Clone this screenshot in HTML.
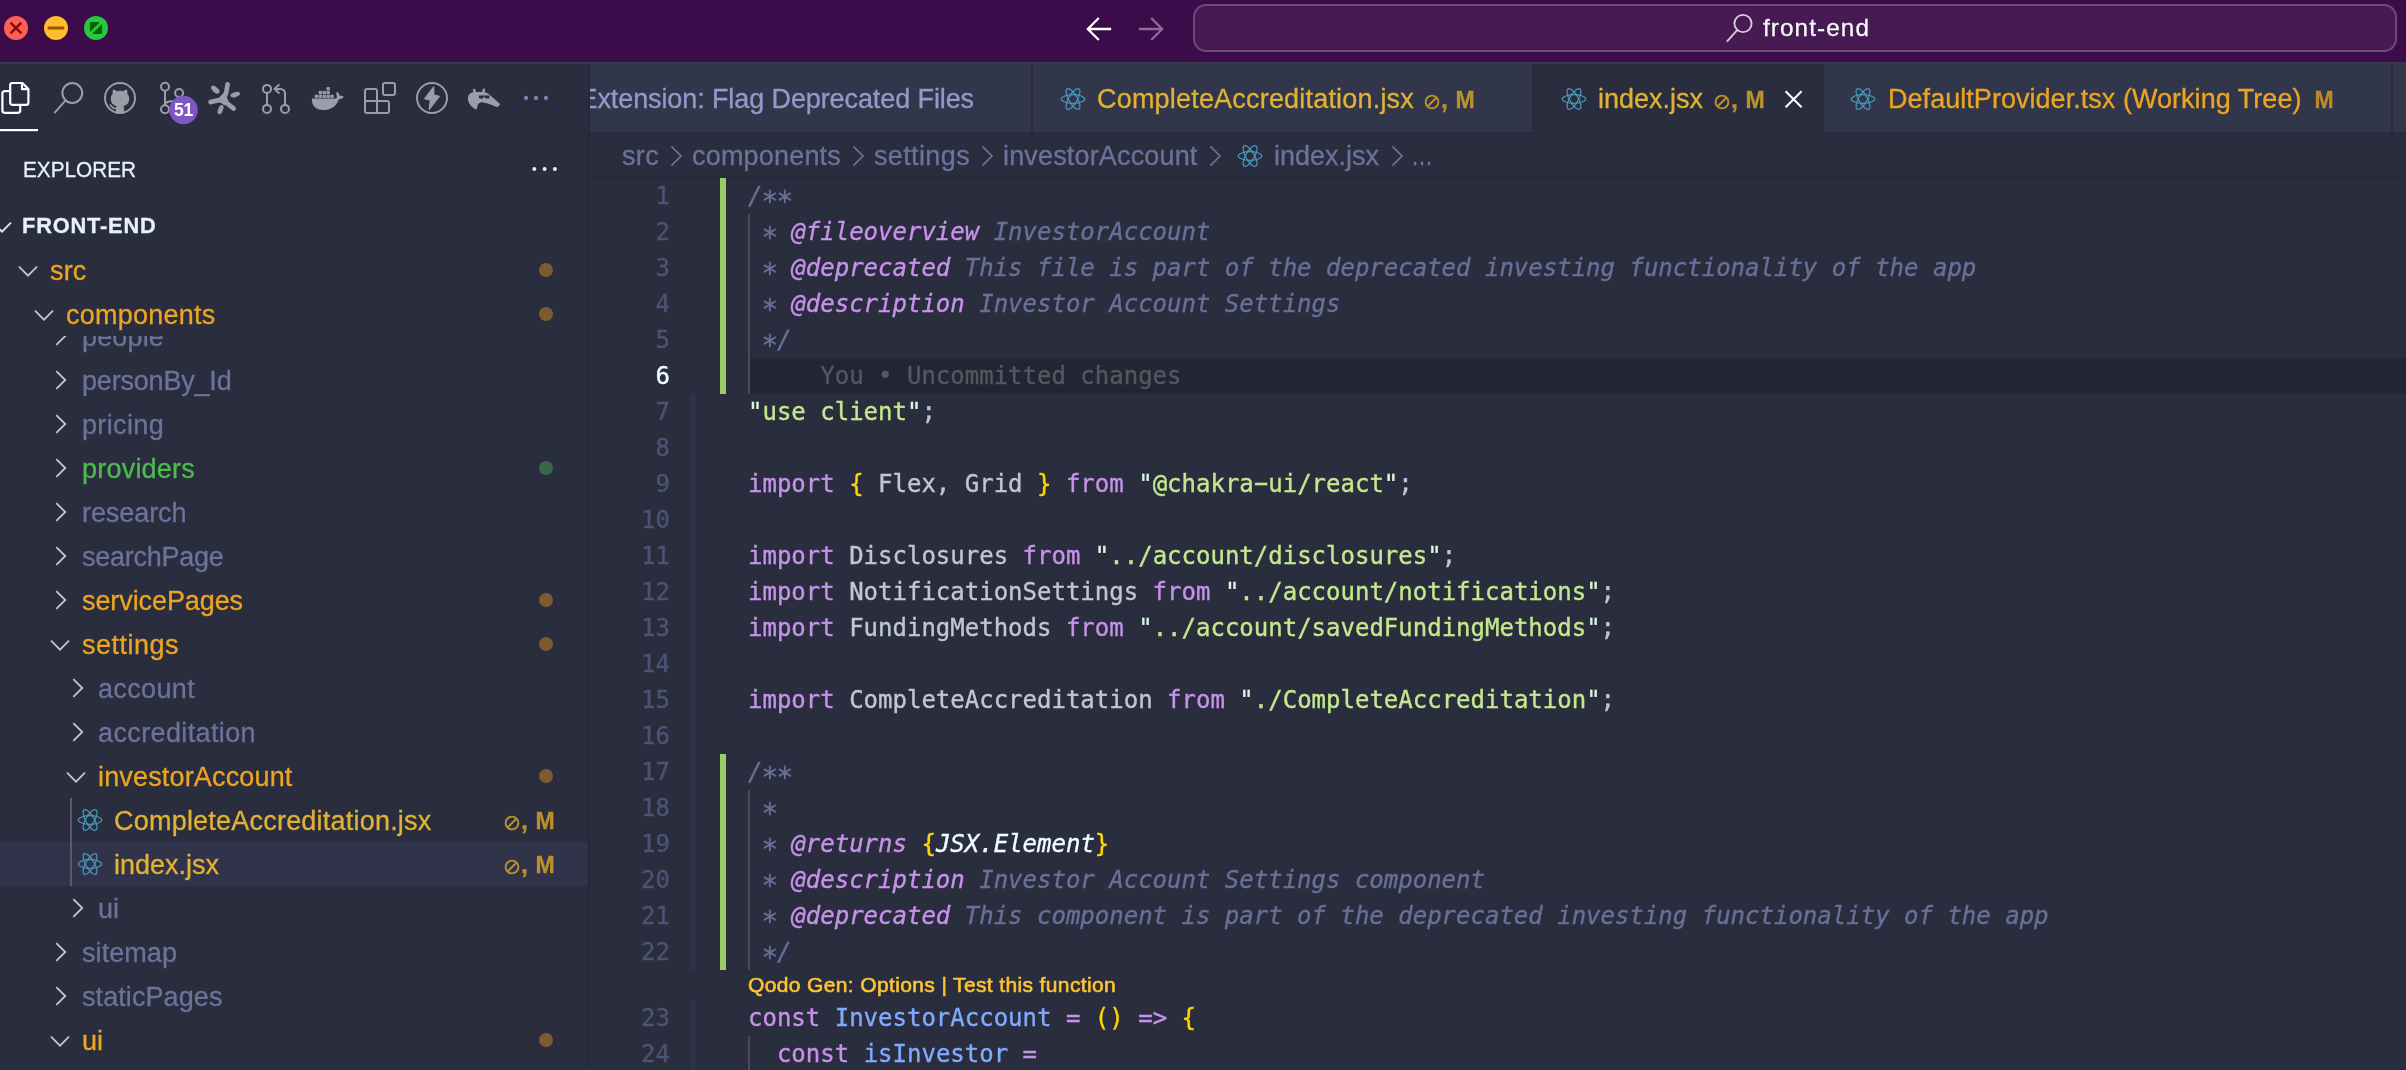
<!DOCTYPE html>
<html lang="en"><head><meta charset="utf-8"><title>index.jsx — front-end</title>
<style>
html,body{margin:0;padding:0;background:#292d3e;}
body{width:2406px;height:1070px;overflow:hidden;position:relative;font-family:"Liberation Sans", sans-serif;}
#app{position:absolute;left:0;top:0;width:2406px;height:1070px;overflow:hidden;will-change:transform;}
#app div,#app span,#app svg{position:absolute;white-space:pre;}
#app span{-webkit-text-stroke:0.3px currentColor;}
#app .cl,#app .cl span,#app .ln{-webkit-text-stroke:0.35px currentColor;}
#app .cl{left:748px;height:36px;line-height:36px;font-family:"DejaVu Sans Mono", "Liberation Mono", monospace;font-size:24px;color:#bfc7d5;letter-spacing:0.001px;}
#app .cl span,#app .cl i{position:static;}
#app .ln{left:600px;width:70px;text-align:right;height:36px;line-height:36px;font-family:"DejaVu Sans Mono", "Liberation Mono", monospace;font-size:24px;color:#4c5374;}
.c{color:#697098;font-style:italic;}
.t{color:#c792ea;font-style:italic;}
.k{color:#c792ea;}
.s{color:#c3e88d;}
.q{color:#d9f5dd;}
.f{color:#82aaff;}
.g{color:#ffd700;}
.w{color:#eeffff;font-style:italic;}
#app .cl .h{display:inline-block;transform:translateY(-0.700px) scaleX(1.920);}
#app .cl .a{display:inline-block;font-style:normal;transform:translate(0.600px,5.500px) scale(1.160);}
</style></head>
<body><div id="app">
<div style="left:0px;top:0px;width:2406px;height:62px;background:#3c0c4a;"></div>
<div style="left:0px;top:62px;width:2406px;height:2px;background:#343a50;"></div>
<div style="left:0px;top:64px;width:588px;height:1006px;background:#292d3e;"></div>
<div style="left:588px;top:64px;width:2px;height:1006px;background:#262939;"></div>
<div style="left:0px;top:132px;width:588px;height:1.5px;background:#272a3a;"></div>
<div style="left:590px;top:64px;width:1816px;height:68px;background:#31364a;"></div>
<div style="left:590px;top:132px;width:1816px;height:938px;background:#292d3e;"></div>
<svg style="left:0;top:0" width="130" height="62" viewBox="0 0 130 62">
<circle cx="16" cy="28" r="12" fill="#fe5f57"/><path d="M11.300 23.300l9.300 9.300M20.600 23.300l-9.300 9.300" stroke="#8c0a05" stroke-width="2.500" stroke-linecap="round" fill="none"/>
<circle cx="56" cy="28" r="12" fill="#febc2e"/><path d="M49 28h14" stroke="#985700" stroke-width="3" stroke-linecap="round"/>
<circle cx="96" cy="28" r="12" fill="#28c840"/><path d="M90.3 22.6h8.6l-8.6 8.6zM101.7 33.4h-8.6l8.6-8.6z" fill="#006500" stroke="#006500" stroke-width="1" stroke-linejoin="round"/>
</svg>
<svg style="left:1080px;top:10px" width="100" height="40" viewBox="0 0 100 40" fill="none" stroke-width="2.3" stroke-linecap="square" stroke-linejoin="miter">
<path d="M30 19H8.5M18 8.8L7.8 19L18 29.2" stroke="#ffffff"/>
<path d="M60 19H81.5M72 8.8L82.2 19L72 29.2" stroke="#8d6a99"/>
</svg>
<div style="left:1193px;top:4px;width:1200px;height:44px;border:2px solid #6d4a7c;border-radius:13px;background:#471a54"></div>
<svg style="left:1720px;top:10px" width="40" height="40" viewBox="0 0 40 40" fill="none" stroke="#d9cadd" stroke-width="1.9">
<circle cx="23" cy="13.5" r="8.6"/><path d="M17.2 20.2L7.5 31" stroke-linecap="square"/></svg>
<span style="left:1763px;top:11.9px;height:32px;line-height:32px;font-size:24.3px;color:#f4fbf6;font-weight:400;letter-spacing:1.084px;">front-end</span>
<svg style="left:0;top:64px" width="588" height="70" viewBox="0 64 588 70" fill="none" stroke="#9c9da9" stroke-width="2" stroke-linejoin="round">
<!-- explorer (active) -->
<g stroke="#ffffff" stroke-width="2.2">
<path d="M22.4 83H12.4a2.2 2.2 0 0 0-2.2 2.2V102.7a2.2 2.2 0 0 0 2.2 2.2H26.2a2.2 2.2 0 0 0 2.2-2.2V89Z"/>
<path d="M22 83.4V89.2H28"/>
<path d="M9.6 91.1H4.6a2.2 2.2 0 0 0-2.2 2.2V110.6a2.2 2.2 0 0 0 2.2 2.2H18a2.2 2.2 0 0 0 2.2-2.2V105.6"/>
</g>
<rect x="0" y="129" width="38" height="2.2" fill="#ffffff" stroke="none"/>
<!-- search -->
<circle cx="72.3" cy="93" r="9.9"/><path d="M65.6 100.4L54.3 113.2"/>
<!-- github -->
<circle cx="120" cy="98" r="15"/>
<g transform="translate(0 2.1)">
<path stroke="none" fill="#9c9da9" d="M120 88.6c-1.1 0-2.2.15-3.2.45-1.9-1.3-3.2-1.6-3.9-1.2-.5 1.3-.55 2.6-.2 3.700-1.200 1.300-1.900 3-1.900 5 0 4.300 2.400 6.600 5.900 7.400-.5.600-.75 1.400-.8 2.300v3.500c1.300.400 2.700.600 4.100.600s2.800-.2 4.100-.600v-3.100c0-1.200-.3-2.100-.85-2.700 3.500-.8 5.950-3.100 5.950-7.400 0-2-.7-3.700-1.900-5 .35-1.100.3-2.400-.2-3.700-.7-.4-2-.1-3.900 1.200-1-.3-2.100-.45-3.200-.45Z"/>
<path d="M116 106.200c-2.300.5-3.400-.5-4.200-1.800-.4-.7-1-1.300-1.700-1.500" stroke-width="1.500" stroke-linecap="round"/>
</g>
<!-- source control -->
<circle cx="165" cy="86.7" r="4"/><circle cx="165" cy="109.2" r="4"/><circle cx="179.1" cy="93" r="4"/>
<path d="M165 90.700V105.200M179.100 97c0 3.200-2.600 4.300-6.800 4.300-4.300 0-7.300 1.200-7.300 3.900"/>
<circle cx="183.500" cy="110" r="14.300" fill="#7e57c2" stroke="none"/>
<!-- asterisk-like logo -->
<g stroke-width="4.700" stroke-linecap="round">
<path d="M223.200 100.200C225.800 95 227.300 89.500 227.600 84.400M224 99.600C219.500 99.700 215 100.700 210.600 102.100M222.800 99C226 102.800 229.600 105.800 233.700 108.500"/>
</g>
<g stroke="none" fill="#9c9da9">
<ellipse cx="215.300" cy="89.700" rx="5.100" ry="2.600" transform="rotate(42 215.300 89.700)"/>
<ellipse cx="235.200" cy="94.600" rx="4.900" ry="2.500" transform="rotate(-18 235.200 94.600)"/>
<ellipse cx="220.600" cy="109.600" rx="4.800" ry="2.400" transform="rotate(-68 220.600 109.600)"/>
<path d="M218.500 98L224.500 92L228.500 101L224.500 105.500L220.500 102.500Z"/>
</g>
<!-- pull request -->
<circle cx="267" cy="88.900" r="4"/><circle cx="267" cy="108.900" r="4"/><circle cx="285" cy="108.900" r="4"/>
<path d="M267 92.900V104.900M285 104.900V93.400a4.500 4.500 0 0 0-4.500-4.500H275" />
<path d="M279.400 84.300L274.600 88.900L279.400 93.500" stroke-linejoin="miter"/>
<!-- docker -->
<g stroke="none" fill="#9c9da9">
<path d="M311.900 98.600h22.700c1.600 0 2.500-.5 2.300-2-.3-1.700-.8-3.200-.5-4.200.6-.5 1.200-.3 1.700.3 1.200 1.400 1.600 2.500 1.800 3.300 1.400-.3 2.700-.1 3.700.6-.8 1.800-2.500 2.500-4.600 2.600-2.800 7.300-8.300 10.800-15.600 10.800-7.600 0-11.900-4.200-11.500-11.400Z"/>
<rect x="314.800" y="94.700" width="3.300" height="3.200"/><rect x="318.700" y="94.700" width="3.300" height="3.200"/><rect x="322.600" y="94.700" width="3.300" height="3.200"/><rect x="326.500" y="94.700" width="3.300" height="3.200"/><rect x="330.400" y="94.700" width="3.300" height="3.200"/>
<rect x="318.700" y="90.900" width="3.300" height="3.200"/><rect x="322.600" y="90.900" width="3.300" height="3.200"/><rect x="326.500" y="90.900" width="3.300" height="3.200"/>
<rect x="326.500" y="87.100" width="3.300" height="3.200"/>
</g>
<!-- extensions -->
<path d="M377 101V91a2 2 0 0 0-2-2H367a2 2 0 0 0-2 2V111a2 2 0 0 0 2 2H387a2 2 0 0 0 2-2V103a2 2 0 0 0-2-2H365M377 101V113"/>
<rect x="383" y="83" width="12" height="12" rx="2"/>
<!-- thunder -->
<circle cx="432" cy="98" r="15"/>
<path stroke="#9c9da9" stroke-width="1.200" fill="#9c9da9" d="M433.700 86.800L424.700 98.700L430.400 100.100L429.200 109.300L439.300 96.300L433.900 95Z"/>
<!-- aardvark -->
<path stroke="none" fill="#9c9da9" fill-rule="evenodd" d="M467.900 99c-.3-2.600.8-4.500 2.600-5.800 1-.6 2-.9 2.900-1l-.5-2.700c-.1-.9 2.200-1 2.400-.1l.6 2.700h6.200l.6-2.900c.2-.9 2.500-.7 2.400.2l-.4 2.800c1.500.3 2.900 1 4.300 2l10.500 9.200c.7.700.5 1.300.1 1.600l-1.700 1.700c-.4.400-.9.400-1.400.2-4.400-2.200-8.800-3.900-13.400-4.500-2.700-.3-4.300.5-5.200 2.600l-1.500 4.700c-4.600-2.200-8-5.900-8.500-10.700ZM478.900 95.600h10.500v1.400c0 .9-.6 1.600-1.500 1.600h-1.600c-.9 0-1.500-.7-1.500-1.600v-.3h-1.300v.3c0 .9-.6 1.600-1.500 1.600h-1.600c-.9 0-1.500-.7-1.500-1.600Z"/>
<!-- more -->
<g stroke="none" fill="#7a83b4"><circle cx="526" cy="98" r="2.150"/><circle cx="536" cy="98" r="2.150"/><circle cx="546" cy="98" r="2.150"/></g>
</svg>
<span style="left:169.500px;top:98px;width:28px;height:24px;line-height:24px;text-align:center;font-size:17.500px;font-weight:700;color:#fff;letter-spacing:-0.200px;-webkit-text-stroke:0">51</span>
<div style="left:590px;top:64px;width:441px;height:68px;overflow:hidden">
<span style="left:-10.5px;top:18.2px;height:35px;line-height:35px;font-size:27px;color:#929ac9;font-weight:400;letter-spacing:-0.100px;">Extension: Flag Deprecated Files</span>
</div>
<div style="left:1031px;top:64px;width:2px;height:68px;background:#282b3c;"></div>
<svg style="left:1058.8px;top:85.5px" width="28.0" height="26.0" viewBox="-14 -13 28 26" fill="none" stroke="#4997bc" stroke-width="1.180"><ellipse rx="11.7" ry="4.3"/><ellipse rx="11.7" ry="4.3" transform="rotate(60)"/><ellipse rx="11.7" ry="4.3" transform="rotate(120)"/></svg>
<span style="left:1097px;top:82.2px;height:35px;line-height:35px;font-size:27px;color:#e2b232;font-weight:400;letter-spacing:0.195px;">CompleteAccreditation.jsx</span>
<svg style="left:1423px;top:92.5px" width="18" height="18" viewBox="-9 -9 18 18" fill="none" stroke="#b9922c" stroke-width="1.900"><circle r="6.4"/><path d="M-4.5 4.5L4.5 -4.5"/></svg>
<span style="left:1441px;top:83.0px;height:32px;line-height:32px;font-size:25px;color:#b9922c;font-weight:700;letter-spacing:0.000px;">,</span>
<span style="left:1455.5px;top:84.5px;height:30px;line-height:30px;font-size:23px;color:#b9922c;font-weight:700;letter-spacing:0.841px;">M</span>
<div style="left:1532px;top:64px;width:292px;height:68px;background:#292d3e;"></div>
<svg style="left:1560.0px;top:85.5px" width="28.0" height="26.0" viewBox="-14 -13 28 26" fill="none" stroke="#4997bc" stroke-width="1.180"><ellipse rx="11.7" ry="4.3"/><ellipse rx="11.7" ry="4.3" transform="rotate(60)"/><ellipse rx="11.7" ry="4.3" transform="rotate(120)"/></svg>
<span style="left:1598px;top:82.2px;height:35px;line-height:35px;font-size:27px;color:#e2b232;font-weight:400;letter-spacing:-0.005px;">index.jsx</span>
<svg style="left:1713px;top:92.5px" width="18" height="18" viewBox="-9 -9 18 18" fill="none" stroke="#b9922c" stroke-width="1.900"><circle r="6.4"/><path d="M-4.5 4.5L4.5 -4.5"/></svg>
<span style="left:1731px;top:83.0px;height:32px;line-height:32px;font-size:25px;color:#b9922c;font-weight:700;letter-spacing:0.000px;">,</span>
<span style="left:1745.5px;top:84.5px;height:30px;line-height:30px;font-size:23px;color:#b9922c;font-weight:700;letter-spacing:0.841px;">M</span>
<svg style="left:1782px;top:87px" width="24" height="24" viewBox="0 0 24 24" fill="none" stroke="#ffffff" stroke-width="2.1"><path d="M3.6 4.2L19.6 20.2M19.6 4.2L3.6 20.2"/></svg>
<svg style="left:1849.0px;top:85.5px" width="28.0" height="26.0" viewBox="-14 -13 28 26" fill="none" stroke="#4997bc" stroke-width="1.180"><ellipse rx="11.7" ry="4.3"/><ellipse rx="11.7" ry="4.3" transform="rotate(60)"/><ellipse rx="11.7" ry="4.3" transform="rotate(120)"/></svg>
<span style="left:1888px;top:82.2px;height:35px;line-height:35px;font-size:27px;color:#eda521;font-weight:400;letter-spacing:0.040px;">DefaultProvider.tsx (Working Tree)</span>
<span style="left:2314.5px;top:84.5px;height:30px;line-height:30px;font-size:23px;color:#bd8a26;font-weight:700;letter-spacing:0.841px;">M</span>
<div style="left:2391px;top:64px;width:2px;height:68px;background:#282b3c;"></div>
<div style="left:590px;top:132px;width:1816px;height:2px;background:#272a3a;"></div>
<span style="left:622px;top:139.0px;height:35px;line-height:35px;font-size:27px;color:#6c739a;font-weight:400;letter-spacing:0.336px;">src</span>
<svg style="left:668px;top:143.6px" width="16" height="24" viewBox="-8 -12 16 24" fill="none" stroke="#6c739a" stroke-width="1.7"><path d="M-4.6 -9.6L5 0L-4.6 9.6"/></svg>
<span style="left:692px;top:139.0px;height:35px;line-height:35px;font-size:27px;color:#6c739a;font-weight:400;letter-spacing:0.191px;">components</span>
<svg style="left:850px;top:143.6px" width="16" height="24" viewBox="-8 -12 16 24" fill="none" stroke="#6c739a" stroke-width="1.7"><path d="M-4.6 -9.6L5 0L-4.6 9.6"/></svg>
<span style="left:874px;top:139.0px;height:35px;line-height:35px;font-size:27px;color:#6c739a;font-weight:400;letter-spacing:0.369px;">settings</span>
<svg style="left:979px;top:143.6px" width="16" height="24" viewBox="-8 -12 16 24" fill="none" stroke="#6c739a" stroke-width="1.7"><path d="M-4.6 -9.6L5 0L-4.6 9.6"/></svg>
<span style="left:1003px;top:139.0px;height:35px;line-height:35px;font-size:27px;color:#6c739a;font-weight:400;letter-spacing:0.160px;">investorAccount</span>
<svg style="left:1207px;top:143.6px" width="16" height="24" viewBox="-8 -12 16 24" fill="none" stroke="#6c739a" stroke-width="1.7"><path d="M-4.6 -9.6L5 0L-4.6 9.6"/></svg>
<svg style="left:1236.0px;top:142.8px" width="28.0" height="26.0" viewBox="-14 -13 28 26" fill="none" stroke="#4997bc" stroke-width="1.180"><ellipse rx="11.7" ry="4.3"/><ellipse rx="11.7" ry="4.3" transform="rotate(60)"/><ellipse rx="11.7" ry="4.3" transform="rotate(120)"/></svg>
<span style="left:1274px;top:139.0px;height:35px;line-height:35px;font-size:27px;color:#6c739a;font-weight:400;letter-spacing:-0.005px;">index.jsx</span>
<svg style="left:1388.5px;top:143.6px" width="16" height="24" viewBox="-8 -12 16 24" fill="none" stroke="#6c739a" stroke-width="1.7"><path d="M-4.6 -9.6L5 0L-4.6 9.6"/></svg>
<span style="left:1410.5px;top:139.0px;height:35px;line-height:35px;font-size:27px;color:#6c739a;font-weight:400;letter-spacing:0.000px;transform:scaleX(0.8148);transform-origin:0 50%;">…</span>
<span style="left:22.5px;top:154.7px;height:29px;line-height:29px;font-size:22.3px;color:#e6f3f6;font-weight:400;letter-spacing:0.000px;transform:scaleX(0.9305);transform-origin:0 50%;">EXPLORER</span>
<svg style="left:526px;top:160px" width="40" height="18" viewBox="526 160 40 18" fill="#e6f3f6"><circle cx="534.300" cy="169" r="2"/><circle cx="544.600" cy="169" r="2"/><circle cx="554.900" cy="169" r="2"/></svg>
<div style="left:0;top:336px;width:588px;height:734px;overflow:hidden"><div style="left:0;top:-336px;width:588px;height:1070px">
<div style="left:0px;top:842px;width:588px;height:44px;background:#30334a;"></div>
<div style="left:70px;top:798px;width:1.6px;height:88px;background:#5a5b66;"></div>
<svg style="left:51px;top:324px" width="20" height="24" viewBox="-10 -12 20 24" fill="none" stroke="#c6c7cd" stroke-width="1.75"><path d="M-4.700 -8.800L4.300 0L-4.700 8.800"/></svg>
<span style="left:82px;top:319.5px;height:35px;line-height:35px;font-size:27px;color:#6c739a;font-weight:400;letter-spacing:0.153px;">people</span>
<svg style="left:51px;top:368px" width="20" height="24" viewBox="-10 -12 20 24" fill="none" stroke="#c6c7cd" stroke-width="1.75"><path d="M-4.700 -8.800L4.300 0L-4.700 8.800"/></svg>
<span style="left:82px;top:363.5px;height:35px;line-height:35px;font-size:27px;color:#6c739a;font-weight:400;letter-spacing:-0.191px;">personBy_Id</span>
<svg style="left:51px;top:412px" width="20" height="24" viewBox="-10 -12 20 24" fill="none" stroke="#c6c7cd" stroke-width="1.75"><path d="M-4.700 -8.800L4.300 0L-4.700 8.800"/></svg>
<span style="left:82px;top:407.5px;height:35px;line-height:35px;font-size:27px;color:#6c739a;font-weight:400;letter-spacing:0.352px;">pricing</span>
<svg style="left:51px;top:456px" width="20" height="24" viewBox="-10 -12 20 24" fill="none" stroke="#c6c7cd" stroke-width="1.75"><path d="M-4.700 -8.800L4.300 0L-4.700 8.800"/></svg>
<span style="left:82px;top:451.5px;height:35px;line-height:35px;font-size:27px;color:#4dbb4f;font-weight:400;letter-spacing:0.217px;">providers</span>
<div style="left:538.700px;top:460.7px;width:14.600px;height:14.600px;border-radius:50%;background:#38684a"></div>
<svg style="left:51px;top:500px" width="20" height="24" viewBox="-10 -12 20 24" fill="none" stroke="#c6c7cd" stroke-width="1.75"><path d="M-4.700 -8.800L4.300 0L-4.700 8.800"/></svg>
<span style="left:82px;top:495.5px;height:35px;line-height:35px;font-size:27px;color:#6c739a;font-weight:400;letter-spacing:-0.068px;">research</span>
<svg style="left:51px;top:544px" width="20" height="24" viewBox="-10 -12 20 24" fill="none" stroke="#c6c7cd" stroke-width="1.75"><path d="M-4.700 -8.800L4.300 0L-4.700 8.800"/></svg>
<span style="left:82px;top:539.5px;height:35px;line-height:35px;font-size:27px;color:#6c739a;font-weight:400;letter-spacing:-0.260px;">searchPage</span>
<svg style="left:51px;top:588px" width="20" height="24" viewBox="-10 -12 20 24" fill="none" stroke="#c6c7cd" stroke-width="1.75"><path d="M-4.700 -8.800L4.300 0L-4.700 8.800"/></svg>
<span style="left:82px;top:583.5px;height:35px;line-height:35px;font-size:27px;color:#eda521;font-weight:400;letter-spacing:-0.090px;">servicePages</span>
<div style="left:538.700px;top:592.7px;width:14.600px;height:14.600px;border-radius:50%;background:#7d5b31"></div>
<svg style="left:48px;top:635px" width="24" height="20" viewBox="-12 -10 24 20" fill="none" stroke="#c6c7cd" stroke-width="1.75"><path d="M-9 -4.300L0 4.700L9 -4.300"/></svg>
<span style="left:82px;top:627.5px;height:35px;line-height:35px;font-size:27px;color:#eda521;font-weight:400;letter-spacing:0.494px;">settings</span>
<div style="left:538.700px;top:636.7px;width:14.600px;height:14.600px;border-radius:50%;background:#7d5b31"></div>
<svg style="left:67.5px;top:676px" width="20" height="24" viewBox="-10 -12 20 24" fill="none" stroke="#c6c7cd" stroke-width="1.75"><path d="M-4.700 -8.800L4.300 0L-4.700 8.800"/></svg>
<span style="left:98px;top:671.5px;height:35px;line-height:35px;font-size:27px;color:#6c739a;font-weight:400;letter-spacing:0.348px;">account</span>
<svg style="left:67.5px;top:720px" width="20" height="24" viewBox="-10 -12 20 24" fill="none" stroke="#c6c7cd" stroke-width="1.75"><path d="M-4.700 -8.800L4.300 0L-4.700 8.800"/></svg>
<span style="left:98px;top:715.5px;height:35px;line-height:35px;font-size:27px;color:#6c739a;font-weight:400;letter-spacing:0.378px;">accreditation</span>
<svg style="left:64px;top:767px" width="24" height="20" viewBox="-12 -10 24 20" fill="none" stroke="#c6c7cd" stroke-width="1.75"><path d="M-9 -4.300L0 4.700L9 -4.300"/></svg>
<span style="left:98px;top:759.5px;height:35px;line-height:35px;font-size:27px;color:#eda521;font-weight:400;letter-spacing:0.160px;">investorAccount</span>
<div style="left:538.700px;top:768.7px;width:14.600px;height:14.600px;border-radius:50%;background:#7d5b31"></div>
<svg style="left:75.5px;top:806.5px" width="28.0" height="26.0" viewBox="-14 -13 28 26" fill="none" stroke="#4997bc" stroke-width="1.180"><ellipse rx="11.7" ry="4.3"/><ellipse rx="11.7" ry="4.3" transform="rotate(60)"/><ellipse rx="11.7" ry="4.3" transform="rotate(120)"/></svg>
<span style="left:114px;top:803.5px;height:35px;line-height:35px;font-size:27px;color:#e2b232;font-weight:400;letter-spacing:0.215px;">CompleteAccreditation.jsx</span>
<svg style="left:503px;top:813.5px" width="18" height="18" viewBox="-9 -9 18 18" fill="none" stroke="#b9922c" stroke-width="1.900"><circle r="6.4"/><path d="M-4.5 4.5L4.5 -4.5"/></svg>
<span style="left:521px;top:804.0px;height:32px;line-height:32px;font-size:25px;color:#b9922c;font-weight:700;letter-spacing:0.000px;">,</span>
<span style="left:535.5px;top:805.5px;height:30px;line-height:30px;font-size:23px;color:#b9922c;font-weight:700;letter-spacing:0.341px;">M</span>
<svg style="left:75.5px;top:850.5px" width="28.0" height="26.0" viewBox="-14 -13 28 26" fill="none" stroke="#4997bc" stroke-width="1.180"><ellipse rx="11.7" ry="4.3"/><ellipse rx="11.7" ry="4.3" transform="rotate(60)"/><ellipse rx="11.7" ry="4.3" transform="rotate(120)"/></svg>
<span style="left:114px;top:847.5px;height:35px;line-height:35px;font-size:27px;color:#e2b232;font-weight:400;letter-spacing:-0.005px;">index.jsx</span>
<svg style="left:503px;top:857.5px" width="18" height="18" viewBox="-9 -9 18 18" fill="none" stroke="#b9922c" stroke-width="1.900"><circle r="6.4"/><path d="M-4.5 4.5L4.5 -4.5"/></svg>
<span style="left:521px;top:848.0px;height:32px;line-height:32px;font-size:25px;color:#b9922c;font-weight:700;letter-spacing:0.000px;">,</span>
<span style="left:535.5px;top:849.5px;height:30px;line-height:30px;font-size:23px;color:#b9922c;font-weight:700;letter-spacing:0.341px;">M</span>
<svg style="left:67.5px;top:896px" width="20" height="24" viewBox="-10 -12 20 24" fill="none" stroke="#c6c7cd" stroke-width="1.75"><path d="M-4.700 -8.800L4.300 0L-4.700 8.800"/></svg>
<span style="left:98px;top:891.5px;height:35px;line-height:35px;font-size:27px;color:#6c739a;font-weight:400;letter-spacing:-0.007px;">ui</span>
<svg style="left:51px;top:940px" width="20" height="24" viewBox="-10 -12 20 24" fill="none" stroke="#c6c7cd" stroke-width="1.75"><path d="M-4.700 -8.800L4.300 0L-4.700 8.800"/></svg>
<span style="left:82px;top:935.5px;height:35px;line-height:35px;font-size:27px;color:#6c739a;font-weight:400;letter-spacing:0.066px;">sitemap</span>
<svg style="left:51px;top:984px" width="20" height="24" viewBox="-10 -12 20 24" fill="none" stroke="#c6c7cd" stroke-width="1.75"><path d="M-4.700 -8.800L4.300 0L-4.700 8.800"/></svg>
<span style="left:82px;top:979.5px;height:35px;line-height:35px;font-size:27px;color:#6c739a;font-weight:400;letter-spacing:0.084px;">staticPages</span>
<svg style="left:48px;top:1031px" width="24" height="20" viewBox="-12 -10 24 20" fill="none" stroke="#c6c7cd" stroke-width="1.75"><path d="M-9 -4.300L0 4.700L9 -4.300"/></svg>
<span style="left:82px;top:1023.5px;height:35px;line-height:35px;font-size:27px;color:#eda521;font-weight:400;letter-spacing:-0.007px;">ui</span>
<div style="left:538.700px;top:1032.7px;width:14.600px;height:14.600px;border-radius:50%;background:#7d5b31"></div>
</div></div>
<div style="left:0px;top:200px;width:588px;height:136px;background:#292d3e;"></div>
<svg style="left:-10px;top:217px" width="24" height="20" viewBox="-12 -10 24 20" fill="none" stroke="#dfe6ee" stroke-width="1.9"><path d="M-9 -4.300L0 4.700L9 -4.300"/></svg>
<span style="left:22px;top:212.2px;height:28px;line-height:28px;font-size:21.8px;color:#e6f3f6;font-weight:700;letter-spacing:0.818px;">FRONT-END</span>
<svg style="left:15.5px;top:261px" width="24" height="20" viewBox="-12 -10 24 20" fill="none" stroke="#c6c7cd" stroke-width="1.75"><path d="M-9 -4.300L0 4.700L9 -4.300"/></svg>
<span style="left:50px;top:253.5px;height:35px;line-height:35px;font-size:27px;color:#eda521;font-weight:400;letter-spacing:0.170px;">src</span>
<div style="left:538.700px;top:262.7px;width:14.600px;height:14.600px;border-radius:50%;background:#7d5b31"></div>
<svg style="left:32px;top:305px" width="24" height="20" viewBox="-12 -10 24 20" fill="none" stroke="#c6c7cd" stroke-width="1.75"><path d="M-9 -4.300L0 4.700L9 -4.300"/></svg>
<span style="left:66px;top:297.5px;height:35px;line-height:35px;font-size:27px;color:#eda521;font-weight:400;letter-spacing:0.241px;">components</span>
<div style="left:538.700px;top:306.7px;width:14.600px;height:14.600px;border-radius:50%;background:#7d5b31"></div>
<div style="left:750px;top:358px;width:1656px;height:36px;background:#222534;"></div>
<div style="left:690px;top:394px;width:6px;height:576px;background:#2f3347;"></div>
<div style="left:690px;top:1000px;width:6px;height:70px;background:#2f3347;"></div>
<div style="left:720px;top:178px;width:6px;height:216px;background:#9ccc65;"></div>
<div style="left:720px;top:754px;width:6px;height:216px;background:#9ccc65;"></div>
<div style="left:748px;top:214px;width:2px;height:180px;background:#4a4b58;"></div>
<div style="left:748px;top:790px;width:2px;height:180px;background:#4a4b58;"></div>
<div style="left:748px;top:1036px;width:2px;height:34px;background:#4a4b58;"></div>
<div style="left:590px;top:176px;width:1816px;height:2px;background:#262a3a;"></div>
<div class="ln" style="top:178px;color:#4c5374">1</div>
<div class="cl" style="top:178px"><span class="c">/<span class="a">*</span><span class="a">*</span></span></div>
<div class="ln" style="top:214px;color:#4c5374">2</div>
<div class="cl" style="top:214px"><span class="c"> <span class="a">*</span> </span><span class="t">@fileoverview</span><span class="c"> InvestorAccount</span></div>
<div class="ln" style="top:250px;color:#4c5374">3</div>
<div class="cl" style="top:250px"><span class="c"> <span class="a">*</span> </span><span class="t">@deprecated</span><span class="c"> This file is part of the deprecated investing functionality of the app</span></div>
<div class="ln" style="top:286px;color:#4c5374">4</div>
<div class="cl" style="top:286px"><span class="c"> <span class="a">*</span> </span><span class="t">@description</span><span class="c"> Investor Account Settings</span></div>
<div class="ln" style="top:322px;color:#4c5374">5</div>
<div class="cl" style="top:322px"><span class="c"> <span class="a">*</span>/</span></div>
<div class="ln" style="top:358px;color:#eeffff">6</div>
<div class="cl" style="top:358px">     <span style="color:#56575f">You • Uncommitted changes</span></div>
<div class="ln" style="top:394px;color:#4c5374">7</div>
<div class="cl" style="top:394px"><span class="q">"</span><span class="s">use client</span><span class="q">"</span>;</div>
<div class="ln" style="top:430px;color:#4c5374">8</div>
<div class="ln" style="top:466px;color:#4c5374">9</div>
<div class="cl" style="top:466px"><span class="k">import</span> <span class="g">{</span> Flex, Grid <span class="g">}</span> <span class="k">from</span> <span class="q">"</span><span class="s">@chakra<span class="h">-</span>ui/react</span><span class="q">"</span>;</div>
<div class="ln" style="top:502px;color:#4c5374">10</div>
<div class="ln" style="top:538px;color:#4c5374">11</div>
<div class="cl" style="top:538px"><span class="k">import</span> Disclosures <span class="k">from</span> <span class="q">"</span><span class="s">../account/disclosures</span><span class="q">"</span>;</div>
<div class="ln" style="top:574px;color:#4c5374">12</div>
<div class="cl" style="top:574px"><span class="k">import</span> NotificationSettings <span class="k">from</span> <span class="q">"</span><span class="s">../account/notifications</span><span class="q">"</span>;</div>
<div class="ln" style="top:610px;color:#4c5374">13</div>
<div class="cl" style="top:610px"><span class="k">import</span> FundingMethods <span class="k">from</span> <span class="q">"</span><span class="s">../account/savedFundingMethods</span><span class="q">"</span>;</div>
<div class="ln" style="top:646px;color:#4c5374">14</div>
<div class="ln" style="top:682px;color:#4c5374">15</div>
<div class="cl" style="top:682px"><span class="k">import</span> CompleteAccreditation <span class="k">from</span> <span class="q">"</span><span class="s">./CompleteAccreditation</span><span class="q">"</span>;</div>
<div class="ln" style="top:718px;color:#4c5374">16</div>
<div class="ln" style="top:754px;color:#4c5374">17</div>
<div class="cl" style="top:754px"><span class="c">/<span class="a">*</span><span class="a">*</span></span></div>
<div class="ln" style="top:790px;color:#4c5374">18</div>
<div class="cl" style="top:790px"><span class="c"> <span class="a">*</span></span></div>
<div class="ln" style="top:826px;color:#4c5374">19</div>
<div class="cl" style="top:826px"><span class="c"> <span class="a">*</span> </span><span class="t">@returns</span><span class="c"> </span><span class="g">{</span><span class="w">JSX.Element</span><span class="g">}</span></div>
<div class="ln" style="top:862px;color:#4c5374">20</div>
<div class="cl" style="top:862px"><span class="c"> <span class="a">*</span> </span><span class="t">@description</span><span class="c"> Investor Account Settings component</span></div>
<div class="ln" style="top:898px;color:#4c5374">21</div>
<div class="cl" style="top:898px"><span class="c"> <span class="a">*</span> </span><span class="t">@deprecated</span><span class="c"> This component is part of the deprecated investing functionality of the app</span></div>
<div class="ln" style="top:934px;color:#4c5374">22</div>
<div class="cl" style="top:934px"><span class="c"> <span class="a">*</span>/</span></div>
<div class="ln" style="top:1000px;color:#4c5374">23</div>
<div class="cl" style="top:1000px"><span class="k">const</span> <span class="f">InvestorAccount</span> <span class="k">=</span> <span class="g">()</span> <span class="k">=&gt;</span> <span class="g">{</span></div>
<div class="ln" style="top:1036px;color:#4c5374">24</div>
<div class="cl" style="top:1036px">  <span class="k">const</span> <span class="f">isInvestor</span> <span class="k">=</span></div>
<span style="left:748px;top:970.7px;height:27px;line-height:27px;font-size:21px;color:#fcc531;font-weight:400;letter-spacing:0.369px;-webkit-text-stroke:0.600px #fcc531;">Qodo Gen: Options | Test this function</span>
</div></body></html>
